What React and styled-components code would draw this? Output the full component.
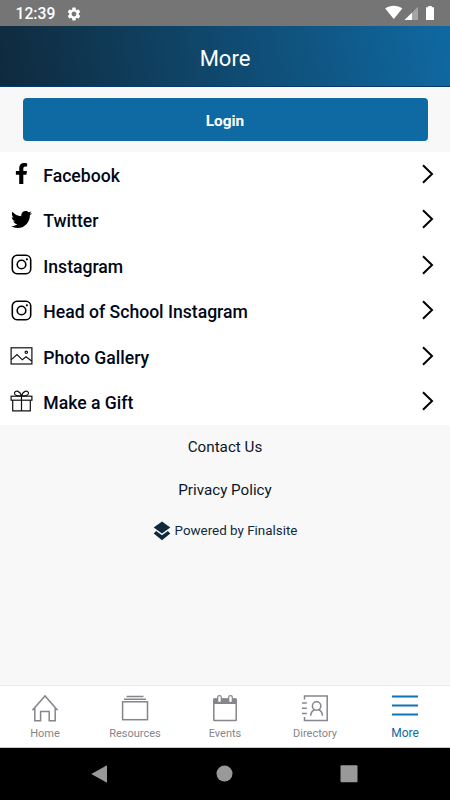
import React, { useState } from "react";
import styled, { createGlobalStyle } from "styled-components";
import { FaFacebookF, FaTwitter } from "react-icons/fa";
import { MdSettings } from "react-icons/md";

const GlobalStyle = createGlobalStyle`
  * {
    box-sizing: border-box;
  }
  body {
    margin: 0;
    font-family: Roboto, "Liberation Sans", sans-serif;
    background: #f8f8f8;
  }
`;

const Screen = styled.div`
  display: flex;
  flex-direction: column;
  width: 450px;
  height: 800px;
  overflow: hidden;
  background: #f8f8f8;
`;

const StatusBar = styled.div`
  display: flex;
  align-items: center;
  height: 26px;
  flex-shrink: 0;
  padding: 1px 13px 0 15.5px;
  background: #757575;
  color: #fff;
  svg {
    display: block;
  }
`;

const Clock = styled.span`
  width: 50.5px;
  font-size: 15.7px;
  font-weight: 500;
  line-height: 26px;
  white-space: nowrap;
`;

const StatusIcons = styled.div`
  display: flex;
  margin-left: auto;
  padding-bottom: 1px;
`;

const Header = styled.header`
  display: flex;
  align-items: center;
  justify-content: center;
  height: 61px;
  flex-shrink: 0;
  padding-top: 4px;
  background: linear-gradient(80deg, #0f2a3d 0%, #0f69a2 100%);
  border-bottom: 1px solid #083a6c;
  color: #fff;
  font-size: 22px;
`;

const LoginArea = styled.div`
  height: 65px;
  flex-shrink: 0;
  padding: 11px 22.5px 0;
`;

const LoginButton = styled.button`
  display: block;
  width: 100%;
  height: 43px;
  padding: 2px 0 0;
  border: 0;
  border-radius: 4px;
  background: #0f69a2;
  color: #fff;
  font-family: inherit;
  font-size: 15.4px;
  font-weight: 700;
`;

const List = styled.div`
  flex-shrink: 0;
  background: #fff;
`;

const Row = styled.div`
  display: flex;
  align-items: center;
  height: 45.5px;
  padding: 0 16px 2px 10px;
  cursor: pointer;
  svg {
    display: block;
    flex-shrink: 0;
  }
`;

const RowIcon = styled.span`
  display: flex;
  justify-content: center;
  width: 23px;
  margin-right: 10.3px;
`;

const RowLabel = styled.span`
  flex: 1;
  padding-top: 4px;
  color: #000718;
  font-size: 17.6px;
  font-weight: 500;
  line-height: 22px;
`;

const Footer = styled.footer`
  display: flex;
  flex: 1;
  flex-direction: column;
  align-items: center;
  padding-top: 12px;
`;

const FooterLink = styled.a`
  height: 42.5px;
  color: #0b1626;
  font-size: 15.2px;
  line-height: 20px;
`;

const Powered = styled.div`
  display: flex;
  align-items: center;
  gap: 4px;
  margin-top: -1px;
  color: #0f2a3d;
  font-size: 13.4px;
  line-height: 20px;
`;

const TabBar = styled.nav`
  display: flex;
  height: 63px;
  flex-shrink: 0;
  background: #fff;
  border-top: 1px solid #ececec;
  border-bottom: 1px solid #c9c9c9;
`;

const Tab = styled.div`
  display: flex;
  flex: 1;
  flex-direction: column;
  align-items: center;
  padding-top: 8px;
  color: ${(props) => (props.$active ? "#0f69a2" : "#85868b")};
  font-size: ${(props) => (props.$active ? "12px" : "11px")};
  line-height: ${(props) => (props.$active ? "14px" : "16px")};
  cursor: pointer;
  svg {
    display: block;
    margin-bottom: 2px;
  }
`;

const SystemBar = styled.div`
  display: flex;
  align-items: center;
  justify-content: space-between;
  height: 52px;
  flex-shrink: 0;
  padding: 0 92px 0 90px;
  background: #000;
`;

const InstagramIcon = () => (
  <svg width="21" height="21" viewBox="0 0 21 21" fill="none" stroke="#000" strokeWidth="1.6">
    <rect x="1.3" y="1.3" width="18.4" height="18.4" rx="4.8" />
    <circle cx="10.5" cy="10.5" r="4.3" />
    <circle cx="15.9" cy="5.3" r="1.1" fill="#000" stroke="none" />
  </svg>
);

const PhotoIcon = () => (
  <svg width="23" height="18" viewBox="0 0 23 18" fill="none" stroke="#111" strokeWidth="1.2">
    <rect x="1.1" y="0.8" width="20.8" height="16.2" />
    <path d="M1.3 12.6 L7 7.5 L12.3 12.8 L16 9.7 L21.7 14" />
    <circle cx="16.3" cy="5.3" r="1.2" />
  </svg>
);

const GiftIcon = () => (
  <svg width="23" height="22" viewBox="0 0 23 22" fill="none" stroke="#111" strokeWidth="1.2">
    <rect x="1.1" y="6.2" width="20.8" height="4" />
    <path d="M2.7 10.2 V20.8 H20.3 V10.2 M11.5 6.2 V20.8" />
    <path d="M11.5 6 C9 6 5.2 6 4.6 3.9 C4 1.6 6.4 0.6 8 1.4 C10 2.3 11 4.3 11.5 6 C12 4.3 13 2.3 15 1.4 C16.6 0.6 19 1.6 18.4 3.9 C17.8 6 14 6 11.5 6" />
  </svg>
);

const Chevron = () => (
  <svg width="14" height="22" viewBox="0 0 14 22" fill="none" stroke="#000" strokeWidth="2">
    <path d="M3 2.3 L12 11 L3 19.7" />
  </svg>
);

const LayersIcon = () => (
  <svg width="18" height="20" viewBox="0 0 18 20" fill="#0f2a3d">
    <path d="M9 0.5 L17.3 6.5 L9 12.5 L0.7 6.5 Z" />
    <path d="M3.1 10 L9 14.3 L14.9 10 L17.3 12.5 L9 19.2 L0.7 12.5 Z" />
  </svg>
);

const HomeIcon = () => (
  <svg width="30" height="30" viewBox="0 0 30 30" fill="none" stroke="#85868b" strokeWidth="1.5">
    <path d="M2.4 16.2 L15 2 L27.6 16.2 M4.8 14 V26.8 H10.6 V17.5 H19.2 V26.8 H25.2 V14" />
  </svg>
);

const ResourcesIcon = () => (
  <svg width="30" height="30" viewBox="0 0 30 30" fill="none" stroke="#85868b" strokeWidth="1.5">
    <path d="M6.5 2.5 H23.5 M4 5.3 H26" />
    <rect x="2.6" y="7.8" width="24.9" height="17.9" />
  </svg>
);

const EventsIcon = () => (
  <svg width="30" height="30" viewBox="0 0 30 30" fill="none" stroke="#85868b" strokeWidth="1.5">
    <rect x="3.8" y="5" width="22.4" height="21.5" rx="0.6" />
    <path d="M3.8 4.5 H26.2 V10 H3.8 Z" fill="#85868b" stroke="none" />
    <rect x="7.7" y="1.6" width="3.6" height="7" rx="1.7" fill="#fff" strokeWidth="1.2" />
    <rect x="18.7" y="1.6" width="3.6" height="7" rx="1.7" fill="#fff" strokeWidth="1.2" />
  </svg>
);

const DirectoryIcon = () => (
  <svg width="30" height="30" viewBox="0 0 30 30" fill="none" stroke="#85868b" strokeWidth="1.5">
    <path d="M4.5 5.5 V2 H27.2 V26.6 H4.5 V23.1" />
    <path d="M2 9 H6.8 M2 14.3 H6.8 M2 19.6 H6.8" />
    <circle cx="16.6" cy="12" r="4.2" />
    <path d="M10.7 21.7 C10.9 18 13 16.3 14.6 15.9 M18.6 15.9 C20.2 16.3 22.3 18 22.5 21.7" />
  </svg>
);

const MenuIcon = () => (
  <svg width="30" height="30" viewBox="0 0 30 30" stroke="#0f74b4" strokeWidth="2">
    <path d="M2 2.6 H28 M2 11.6 H28 M2 20.6 H28" />
  </svg>
);

const links = [
  { label: "Facebook", icon: <FaFacebookF size={21} color="#000" /> },
  { label: "Twitter", icon: <FaTwitter size={21} color="#000" /> },
  { label: "Instagram", icon: <InstagramIcon /> },
  { label: "Head of School Instagram", icon: <InstagramIcon /> },
  { label: "Photo Gallery", icon: <PhotoIcon /> },
  { label: "Make a Gift", icon: <GiftIcon /> },
];

const tabs = [
  { label: "Home", icon: <HomeIcon /> },
  { label: "Resources", icon: <ResourcesIcon /> },
  { label: "Events", icon: <EventsIcon /> },
  { label: "Directory", icon: <DirectoryIcon /> },
  { label: "More", icon: <MenuIcon /> },
];

const App = () => {
  const [active, setActive] = useState("More");

  return (
    <Screen>
      <GlobalStyle />
      <StatusBar>
        <Clock>12:39</Clock>
        <MdSettings size={16} />
        <StatusIcons>
          <svg width="52" height="16" viewBox="0 0 52 16" fill="#fff">
            <path d="M0.2 3.4 C5 -0.3 12.5 -0.3 17.3 3.4 L8.8 14 Z" />
            <path d="M33 1.8 V15 H19.5 Z" opacity="0.35" />
            <path d="M27 7.7 V15 H19.5 Z" />
            <path d="M43.2 1 H46.8 V2.3 H49 V15 H41 V2.3 H43.2 Z" />
          </svg>
        </StatusIcons>
      </StatusBar>

      <Header>More</Header>

      <LoginArea>
        <LoginButton>Login</LoginButton>
      </LoginArea>

      <List>
        {links.map((link) => (
          <Row key={link.label}>
            <RowIcon>{link.icon}</RowIcon>
            <RowLabel>{link.label}</RowLabel>
            <Chevron />
          </Row>
        ))}
      </List>

      <Footer>
        <FooterLink>Contact Us</FooterLink>
        <FooterLink>Privacy Policy</FooterLink>
        <Powered>
          <LayersIcon />
          <span>Powered by Finalsite</span>
        </Powered>
      </Footer>

      <TabBar>
        {tabs.map((tab) => (
          <Tab
            key={tab.label}
            $active={tab.label === active}
            onClick={() => setActive(tab.label)}
          >
            {tab.icon}
            <span>{tab.label}</span>
          </Tab>
        ))}
      </TabBar>

      <SystemBar>
        <svg width="18" height="20" viewBox="0 0 18 20" fill="#999">
          <path d="M1.3 10 L17 1.3 V18.7 Z" />
        </svg>
        <svg width="18" height="18" viewBox="0 0 18 18" fill="#999">
          <circle cx="9.5" cy="8.6" r="8" />
        </svg>
        <svg width="18" height="18" viewBox="0 0 18 18" fill="#999">
          <rect x="0.5" y="0.2" width="17" height="17" rx="1" />
        </svg>
      </SystemBar>
    </Screen>
  );
};

export default App;
